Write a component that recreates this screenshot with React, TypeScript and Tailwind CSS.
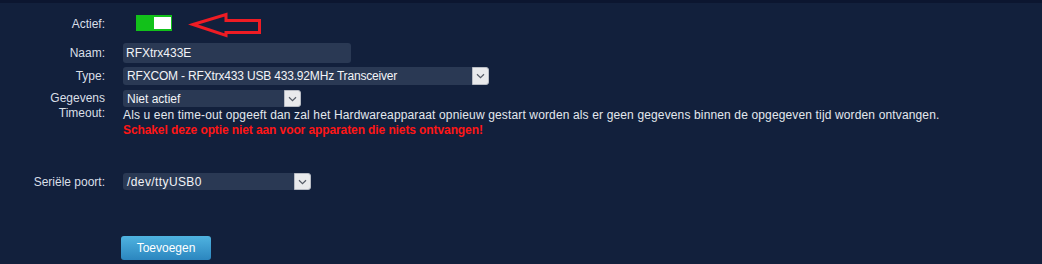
import React from "react";

const Chevron = () => (
  <span className="flex h-full w-[17px] items-center justify-center rounded-r-[3px] border border-[#b8bcc4] bg-[#e9eaec]">
    <svg width="9" height="6" viewBox="0 0 9 6" fill="none">
      <path d="M1 1.2 L4.5 4.6 L8 1.2" stroke="#555b66" strokeWidth="1.2" />
    </svg>
  </span>
);

type SelectProps = { value: string; width: string; height: string; tracking: string };

const FakeSelect: React.FC<SelectProps> = ({ value, width, height, tracking }) => (
  <div className={`flex ${width} ${height} items-stretch rounded-[3px] bg-[#2a3954]`}>
    <span className={`flex flex-1 items-center truncate pl-[4px] leading-none text-[#f2f4f7] ${tracking}`}>{value}</span>
    <Chevron />
  </div>
);

export default function App() {
  return (
    <div
      className="relative h-[264px] w-[1042px] overflow-hidden bg-[#12203c] text-[12px] text-[#d9dfe7]"
      style={{ fontFamily: '"Liberation Sans", Arial, sans-serif' }}
    >
      {/* top band */}
      <div className="h-[3px] bg-[#0c1630]" />

      {/* ACTIEF */}
      <div className="mt-[12px] flex h-[16px] items-center">
        <span className="w-[105px] pt-[2px] text-right">Actief:</span>
        <div className="ml-[31px] flex h-[16px] w-[36px] items-center justify-end bg-[#12c11a] pr-[1px]">
          <div className="h-[12px] w-[17px] bg-white" />
        </div>
      </div>

      {/* red arrow pointing at the switch */}
      <svg className="absolute left-[185px] top-[8px]" width="80" height="34" viewBox="0 0 80 34" fill="none">
        <path
          d="M8 16.5 L41 6.5 L41 12.5 L74.5 12.5 L74.5 24.5 L41 24.5 L41 27.5 Z"
          stroke="#ee1c24"
          strokeWidth="3"
          strokeLinejoin="miter"
        />
      </svg>

      {/* NAAM */}
      <div className="mt-[12px] flex h-[20px] items-center">
        <span className="w-[105px] text-right">Naam:</span>
        <div className="ml-[18px] flex h-[20px] w-[228px] items-center rounded-[3px] bg-[#2a3954] pl-[3px] text-[#f2f4f7]">
          RFXtrx433E
        </div>
      </div>

      {/* TYPE */}
      <div className="mt-[4px] flex h-[18px] items-center">
        <span className="w-[105px] text-right">Type:</span>
        <div className="ml-[18px]">
          <FakeSelect
            value="RFXCOM - RFXtrx433 USB 433.92MHz Transceiver"
            width="w-[366px]"
            height="h-[18px]"
            tracking="tracking-[-0.18px]"
          />
        </div>
      </div>

      {/* GEGEVENS TIMEOUT */}
      <div className="mt-[5px] flex">
        <div className="w-[105px] text-right leading-[15px]">
          <div className="pt-[1px]">Gegevens</div>
          <div>Timeout:</div>
        </div>
        <div className="ml-[18px]">
          <FakeSelect value="Niet actief" width="w-[178px]" height="h-[17px]" tracking="tracking-normal" />
          <div className="mt-[1px] leading-[15px] tracking-[0.14px] text-[#e3e8ee]">
            Als u een time-out opgeeft dan zal het Hardwareapparaat opnieuw gestart worden als er geen gegevens binnen de opgegeven tijd worden ontvangen.
          </div>
          <div className="text-[12px] font-bold leading-[15px] tracking-[-0.1px] text-[#ff1616]">
            Schakel deze optie niet aan voor apparaten die niets ontvangen!
          </div>
        </div>
      </div>

      {/* SERIELE POORT */}
      <div className="mt-[35px] flex h-[17px] items-center">
        <span className="w-[105px] text-right">Seriële poort:</span>
        <div className="ml-[18px]">
          <FakeSelect value="/dev/ttyUSB0" width="w-[188px]" height="h-[17px]" tracking="tracking-[0.4px]" />
        </div>
      </div>

      {/* BUTTON */}
      <div className="mt-[46px] pl-[121px]">
        <button className="h-[24px] w-[90px] rounded-[3px] bg-gradient-to-b from-[#4fb3e0] to-[#2b86bf] text-[12px] text-white">
          Toevoegen
        </button>
      </div>
    </div>
  );
}
